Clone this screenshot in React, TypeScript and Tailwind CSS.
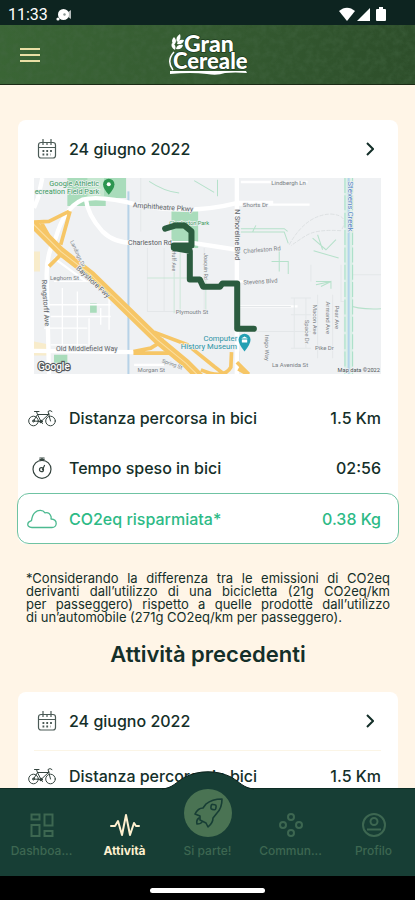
import { ReactNode } from 'react';

interface StatRowProps {
  icon: ReactNode;
  label: string;
  value: string;
  highlighted?: boolean;
}

interface NavItem {
  label: string;
  href: string;
  icon: ReactNode;
  active?: boolean;
}

function StatusBar() {
  return (
    <div className="flex h-[25px] shrink-0 items-center justify-between bg-[#0d2420] pl-2 pr-7 pt-1 text-white">
      <div className="flex items-center gap-2">
        <span className="font-[Roboto,sans-serif] text-base leading-none">11:33</span>
        <svg className="h-3 w-4" viewBox="0 0 16 12" fill="currentColor">
          <circle cx="7.500" cy="5.500" r="5.500" />
          <path d="M10 3h2l3-2v9l-3-2h-2z" opacity=".7" />
          <circle cx="2" cy="10" r="1.600" />
          <circle cx="8.500" cy="5.500" r="1.200" fill="#8a9693" />
        </svg>
      </div>
      <svg className="h-[15px] w-12" viewBox="0 0 48 15" fill="currentColor">
        <path d="M0 4C5-.5 11-.5 16 4L8 14z" />
        <path d="M31 1v13H18z" />
        <path d="M38 2h2V0h4v2h2q1 0 1 1v10q0 1-1 1h-8q-1 0-1-1V3q0-1 1-1z" />
      </svg>
    </div>
  );
}

function Logo() {
  return (
    <svg className="h-11 w-20" viewBox="0 0 80 44" fill="#fff" role="img" aria-label="Gran Cereale">
      <g fontFamily="Lato, sans-serif" fontWeight="900" stroke="#1b3a1c" strokeWidth="1.500" paintOrder="stroke">
        <text x="16" y="19" fontSize="23">Gran</text>
        <text x="5" y="36" fontSize="22">Cereale</text>
      </g>
      <path d="M12 1q-5 3-3 8 5-3 3-8zM6 4Q2 8 6 12q4-4 0-8zM4 10q-2 4 3 7 2-5-3-7zM16 7q-6-1-7 4 6 1 7-4zM15 12q-6-1-7 4 6 1 7-4z" />
      <path d="M6 19Q-2 28 5 37" fill="none" stroke="#fff" strokeWidth="1.500" />
      <path d="M2 38h76l1 2q-12-1-22 0-8 3-18 1-16-2-37 0z" />
    </svg>
  );
}

function AppHeader() {
  return (
    <header className="relative flex h-[60px] shrink-0 items-center justify-center border-b border-[#1b2b16] bg-linear-to-r from-[#3a6535] via-[#355b31] to-[#2d4e2a]">
      <svg className="absolute inset-0 h-full w-full opacity-40" aria-hidden="true">
        <filter id="grass">
          <feTurbulence type="fractalNoise" baseFrequency=".15" numOctaves="4" seed="4" />
          <feColorMatrix values="0 0 0 0 .06  0 0 0 0 .14  0 0 0 0 .06  0 2 0 0 -.7" />
        </filter>
        <rect width="100%" height="100%" filter="url(#grass)" />
      </svg>
      <button type="button" aria-label="Menu" className="absolute left-5 top-5 flex h-5 w-5 flex-col justify-center gap-1">
        <span className="h-[2px] w-5 bg-[#e9dfa5]" />
        <span className="h-[2px] w-5 bg-[#e9dfa5]" />
        <span className="h-[2px] w-5 bg-[#e9dfa5]" />
      </button>
      <div className="relative">
        <Logo />
      </div>
    </header>
  );
}

function CalendarIcon() {
  return (
    <svg className="h-5 w-5" viewBox="0 0 20 20" fill="none" stroke="#4b5a56" strokeWidth="1.200">
      <rect x="1.500" y="3.500" width="17" height="15.500" rx="2.500" />
      <path d="M1.500 8.500h17M6 0v6M10 3v3M14 0v6" />
      <path d="M5.500 12h10M5.500 15.500h8" strokeWidth="1.800" strokeDasharray="1.800 2" />
    </svg>
  );
}

function BikeIcon() {
  return (
    <svg className="h-[17px] w-7" viewBox="0 0 28 17" fill="none" stroke="#35443f" strokeWidth="1" strokeLinecap="round" strokeLinejoin="round">
      <circle cx="5.500" cy="11" r="4.800" />
      <circle cx="22.500" cy="11" r="4.800" />
      <path d="M5.500 11 9.500 4.500 13 11.500 21 4M5.500 11l7.500.5M9.500 4.500H21M9.500 4.500 8.500 1.500M6.500 1.500h4.500M22.500 11 20 1.500q2-2 4 0M13 11.500l1.500 2" />
      <circle cx="13" cy="11.500" r="1.300" fill="#35443f" />
      <circle cx="5.500" cy="11" r="1" />
    </svg>
  );
}

function StopwatchIcon() {
  return (
    <svg className="h-[22px] w-5" viewBox="0 0 20 22" fill="none" stroke="#35443f" strokeWidth="1.200" strokeLinecap="round">
      <circle cx="10" cy="12.300" r="9" />
      <path d="M7.800 1h4.400M10 1v2.500M7.800 2.500h4.400M12.500 8.500l-2 4" />
      <circle cx="9.500" cy="12.700" r="2" />
    </svg>
  );
}

function CloudIcon() {
  return (
    <svg className="h-5 w-[30px]" viewBox="0 0 30 20" fill="none" stroke="#4dba91" strokeWidth="1.300" strokeLinejoin="round">
      <path d="M5 18.500C1.500 18.500.6 16.500.8 15c.2-2 1.700-2.700 3.700-3.300C5 8 5.500 5.500 8 3.500c3-3 8-2.800 10 .3 2.500-.5 5 .7 6 3.700.3 1 .2 1.500 0 2.500 3 .2 5.200 2 5.200 4.500 0 2-1.700 4-4.200 4z" />
    </svg>
  );
}

function RouteMap() {
  return (
    <svg
      className="block w-full"
      viewBox="0 0 1040 588"
      role="img"
      aria-label="Mappa del percorso"
      fontFamily="Roboto, sans-serif"
      fontSize="18"
      fill="#7b8185"
    >
      <rect width="1040" height="588" fill="#eff1f3" />

      {/* Parks and built areas */}
      <g fill="#a9dcbb">
        <path d="M100 0h176v60H215V84H100zM412 98h80v112h-80zM168 376h20v28h-20zM60 530h40v24H60z" />
        <path d="M160 0h50v55h-50z" fill="#c5e8d0" />
      </g>
      <path d="M0 220h18v60H0zM0 490l42 8v34H0z" fill="#f8eccb" />

      {/* Minor streets */}
      <g fill="none" stroke="#fff" strokeWidth="4">
        <path d="M30 380h200M50 415h180M30 450h130M85 330v170M130 340v170M165 420v95M200 390v50M225 335v120M50 500h110M60 310h120" />
        <path d="M155 310 60 240M300 560h90M620 12h200M606 80h220M606 310h110M610 385h180" strokeWidth="7" />
      </g>
      <g fill="none" stroke="#e4e7e9" strokeWidth="3">
        <path d="M320 0v160M340 210v190h120M390 210v190M510 210v190M610 385h160M620 460h160M830 260v50M920 260v110h20M770 360h60M770 410h60M770 460h60M770 510h60M780 360v150M815 360v150M850 350v190M895 350v190M930 370v165" />
        <path d="M955 290h85M615 520v60" />
      </g>
      <path d="M765 200q50-90 125-92 60 5 30 50-75-5-105 15-20 12-45 30" fill="none" stroke="#d3d8da" strokeWidth="2" strokeDasharray="12 4" />

      {/* Footpaths and creek */}
      <g fill="none" stroke="#b5e1ca" strokeWidth="3">
        <path d="M620 162h130l12 34M620 152h130l10 8M712 250h50v38M735 220v60M835 180l40 35 30-30M838 218l75 22M850 170l15 45M845 320l45-10v22M845 310h45l-30 15M655 162l10-20M550 5v50M345 10q45 30 90 35M480 8l60 35M940 380q30 15 100 12" />
        <path d="M340 300h130M420 215v190M438 215v185M515 280v120" opacity=".6" />
      </g>
      <path d="M943 0v588" stroke="#dcf0e8" strokeWidth="26" />
      <path d="M932 0v588M955 0v588" stroke="#a5dfc6" strokeWidth="3" strokeDasharray="45 7" />
      <path d="M943 0v588" stroke="#b3d3ec" strokeWidth="6" />
      <path d="M283 40v548" stroke="#b7d2e7" strokeWidth="6" />

      {/* Main roads */}
      <g fill="none" stroke="#fff" strokeWidth="13" strokeLinejoin="round">
        <path d="M25 0 12 60 0 90M45 588 38 300Q36 225 65 180 90 90 145 65q50-15 170 16 150 30 292-6h110" />
        <path d="M155 60Q160 110 205 160 240 195 300 195H480l128 20M608 0V588M0 518l300 4" />
      </g>

      {/* Freeway */}
      <g fill="none" stroke="#f6c666" strokeLinejoin="round">
        <path d="M0 140 80 220 170 290 370 485 455 555 500 600" strokeWidth="27" />
        <path d="M0 132 45 130 105 100M45 175 20 130M45 265 80 230 100 240M108 100 80 200M298 520 350 510 390 485M298 525h120M360 462 460 500 540 565 570 588M500 575q70 30 90-8l2-45M608 552l36 36M612 572l28 16" strokeWidth="11" />
        <path d="M0 140 80 220 170 290 370 485 455 555 500 600" stroke="#fbe0a2" strokeWidth="3" />
      </g>

      <g stroke="#eff1f3" strokeWidth="4" paintOrder="stroke">
        <g fill="#3d9b62" fontSize="22">
          <text x="46" y="24">Google Athletic</text>
          <text x="2" y="48">ecreation Field Park</text>
          <text x="405" y="142" fontSize="17">Charleston Park</text>
        </g>
        <g fill="#5b6165" fontSize="21">
          <text x="296" y="88" transform="rotate(4 296 88)">Amphitheatre Pkwy</text>
          <text x="282" y="202">Charleston Rd</text>
          <text x="66" y="520">Old Middlefield Way</text>
          <text x="125" y="272" transform="rotate(43 125 272)">Bayshore Fwy</text>
          <text x="23" y="306" transform="rotate(86 23 306)">Rengstorff Ave</text>
          <text x="603" y="94" transform="rotate(90 603 94)">N Shoreline Blvd</text>
        </g>
        <text x="48" y="305">Leghorn St</text>
        <text x="108" y="190" transform="rotate(65 108 190)" fontSize="16">Landings Dr</text>
        <text x="425" y="407">Plymouth St</text>
        <text x="310" y="582">Morgan St</text>
        <text x="382" y="552" transform="rotate(20 382 552)" fontSize="16">Spring St</text>
        <text x="711" y="20">Lindbergh Ln</text>
        <text x="626" y="88">Shorts Dr</text>
        <text x="628" y="226" transform="rotate(-5 628 226)">Charleston Rd</text>
        <text x="628" y="319" transform="rotate(-3 628 319)">Stevens Blvd</text>
        <text x="713" y="566">La Avenida St</text>
        <text x="842" y="517">Pike Dr</text>
        <text x="691" y="470" transform="rotate(90 691 470)">Inigo Way</text>
        <text x="835" y="380" transform="rotate(90 835 380)">Macon Ave</text>
        <text x="875" y="370" transform="rotate(90 875 370)">Armand Ave</text>
        <text x="902" y="382" transform="rotate(90 902 382)">Pear Ave</text>
        <text x="812" y="425" transform="rotate(90 812 425)">Space Dr</text>
        <text x="415" y="218" transform="rotate(90 415 218)" fontSize="16">Huff Ave</text>
        <text x="508" y="225" transform="rotate(90 508 225)" fontSize="16">Joaquin Rd</text>
        <text x="940" y="10" transform="rotate(90 940 10)" fontSize="24" fill="#5186c4">Stevens Creek</text>
        <g fill="#2b94a6" fontSize="23">
          <text x="508" y="488">Computer</text>
          <text x="440" y="514">History Museum</text>
        </g>
        <text x="910" y="580" fontSize="17" fill="#4b5155">Map data ©2022</text>
      </g>

      {/* Recorded route */}
      <path
        d="M393 152 425 142h25l22 18v42h-53v8l48 8v86h30l10 22h50l8-10h44v136h50"
        fill="none"
        stroke="#2b5c3f"
        strokeWidth="18"
        strokeLinecap="round"
        strokeLinejoin="round"
      />

      <path d="M224 50q-17-18-17-31a17 17 0 0 1 34 0q0 13-17 31z" fill="#2c9650" />
      <circle cx="224" cy="19" r="6" fill="#fff" />
      <path d="M631 520q-18-22-18-35a18 18 0 0 1 36 0q0 13-18 35z" fill="#24a0b3" />
      <path d="m621 481 10-6 10 6zM623 484h16v9h-16z" fill="#fff" />
      <text x="12" y="576" fontSize="30" fontWeight="500" fill="#fff" stroke="#55595c" strokeWidth="7" paintOrder="stroke">
        Google
      </text>
    </svg>
  );
}

function DateRow() {
  return (
    <a href="#attivita" className="flex h-[58px] items-center pl-[19px] pr-6">
      <span className="flex w-8">
        <CalendarIcon />
      </span>
      <span className="flex-1 text-base font-medium">24 giugno 2022</span>
      <svg className="h-4 w-2" viewBox="0 0 8 16" fill="none" stroke="currentColor" strokeWidth="2">
        <path d="m1 2 6 6-6 6" />
      </svg>
    </a>
  );
}

function StatRow({ icon, label, value, highlighted = false }: StatRowProps) {
  return (
    <div
      className={
        highlighted
          ? '-mx-px flex h-[51px] items-center rounded-xl border border-[#6fc3a3] pl-[9px] pr-[17px] text-[#2dba86]'
          : 'flex h-[50px] items-center pl-[9px] pr-[17px]'
      }
    >
      <span className="mr-3 flex w-[30px] shrink-0 items-center justify-center">{icon}</span>
      <dt className="flex-1 text-base font-medium">{label}</dt>
      <dd className="text-base font-medium">{value}</dd>
    </div>
  );
}

function SquaresIcon() {
  return (
    <svg className="h-6 w-6" viewBox="0 0 24 24" fill="none" stroke="currentColor" strokeWidth="2">
      <path d="M1.500 1.500h8v5h-8zM14.500 1.500h8v11h-8zM1.500 12h8v11h-8zM14.500 18h8v5h-8z" />
    </svg>
  );
}

function PulseIcon() {
  return (
    <svg className="h-6 w-[30px]" viewBox="0 0 30 24" fill="none" stroke="currentColor" strokeWidth="2" strokeLinecap="round" strokeLinejoin="round">
      <path d="M1 13h4l3-5 4 14 4-20 4 20 4-12 2 3h3" />
    </svg>
  );
}

function RocketIcon() {
  return (
    <svg className="h-8 w-8" viewBox="0 0 32 32" fill="none" stroke="#173e35" strokeWidth="1.600" strokeLinejoin="round" strokeLinecap="round">
      <path d="M30 2Q20 2 14 7l-3 4q-5 0-8 6l5 2v4l6 3 2 4q5-4 5-9l4-5Q30 11 30 2z" />
      <rect x="19" y="7.500" width="5" height="5" rx="1.500" transform="rotate(8 21 10)" />
      <path d="M7 21q-3 2-2 6 4 0 5-2" />
    </svg>
  );
}

function CommunityIcon() {
  return (
    <svg className="h-6 w-6" viewBox="0 0 24 24" fill="none" stroke="currentColor" strokeWidth="2">
      <circle cx="12" cy="4" r="3" />
      <circle cx="4" cy="12" r="3" />
      <circle cx="20" cy="12" r="3" />
      <circle cx="12" cy="20" r="3" />
    </svg>
  );
}

function ProfileIcon() {
  return (
    <svg className="h-6 w-6" viewBox="0 0 24 24" fill="none" stroke="currentColor" strokeWidth="2">
      <circle cx="12" cy="12" r="11" />
      <circle cx="12" cy="8.500" r="3.500" />
      <path d="M5 16.500h14" />
    </svg>
  );
}

const navItems: NavItem[] = [
  { label: 'Dashboa...', href: '#dashboard', icon: <SquaresIcon /> },
  { label: 'Attività', href: '#attivita', icon: <PulseIcon />, active: true },
  {
    label: 'Si parte!',
    href: '#parti',
    icon: (
      <span className="flex h-12 w-12 items-center justify-center rounded-full bg-[#4a7353]">
        <RocketIcon />
      </span>
    ),
  },
  { label: 'Commun...', href: '#community', icon: <CommunityIcon /> },
  { label: 'Profilo', href: '#profilo', icon: <ProfileIcon /> },
];

function BottomNav() {
  return (
    <nav className="relative h-[88px] shrink-0 border-t border-[#0d2c25] bg-[#173e35]">
      <svg className="absolute -top-[18px] left-1/2 h-5 w-24 -translate-x-1/2" viewBox="0 0 96 20" fill="#173e35">
        <path d="M0 20v-2c12 0 16-7 25-12 14-7 32-7 46 0 9 5 13 12 25 12v2z" />
        <path d="M2 18c11-1 14-7 23-12 14-7 32-7 46 0 9 5 12 11 23 12" fill="none" stroke="#0b211b" />
      </svg>
      <ul className="relative grid h-[68px] grid-cols-5">
        {navItems.map((item) => (
          <li key={item.label}>
            <a
              href={item.href}
              aria-current={item.active ? 'page' : undefined}
              className={`flex h-full flex-col items-center justify-end gap-2 ${
                item.active ? 'font-bold text-[#fff0cf]' : 'font-medium text-[#3d6751]'
              }`}
            >
              {item.icon}
              <span className="text-xs leading-3">{item.label}</span>
            </a>
          </li>
        ))}
      </ul>
    </nav>
  );
}

export default function App() {
  return (
    <div className="flex h-screen flex-col overflow-hidden bg-[#fff5e7] font-[Inter,sans-serif] text-[#142f29]">
      <StatusBar />
      <AppHeader />

      <main className="min-h-0 flex-1 overflow-hidden pl-[18px] pr-[17px] pt-[35px]">
        <section className="rounded-lg bg-white">
          <DateRow />
          <div className="pb-[19px] pl-4 pr-[17px]">
            <RouteMap />
          </div>
          <dl>
            <StatRow icon={<BikeIcon />} label="Distanza percorsa in bici" value="1.5 Km" />
            <StatRow icon={<StopwatchIcon />} label="Tempo speso in bici" value="02:56" />
            <StatRow icon={<CloudIcon />} label="CO2eq risparmiata*" value="0.38 Kg" highlighted />
          </dl>
        </section>

        <p className="mx-2 mt-7 text-justify text-[13px] leading-[13px]">
          *Considerando la differenza tra le emissioni di CO2eq derivanti dall’utilizzo di una bicicletta (21g CO2eq/km
          per&nbsp;passeggero) rispetto a quelle prodotte dall’utilizzo di&nbsp;un’automobile (271g CO2eq/km per
          passeggero).
        </p>

        <h2 className="mt-4 text-center text-[22px] font-semibold leading-7">Attività precedenti</h2>

        <section className="mt-6 rounded-lg bg-white">
          <DateRow />
          <hr className="ml-4 mr-[17px] border-[#fbf5e6]" />
          <dl>
            <StatRow icon={<BikeIcon />} label="Distanza percorsa in bici" value="1.5 Km" />
          </dl>
        </section>
      </main>

      <BottomNav />
      <div className="flex h-6 shrink-0 items-center justify-center bg-black pt-1">
        <div className="h-[5px] w-[115px] rounded-full bg-white" />
      </div>
    </div>
  );
}
